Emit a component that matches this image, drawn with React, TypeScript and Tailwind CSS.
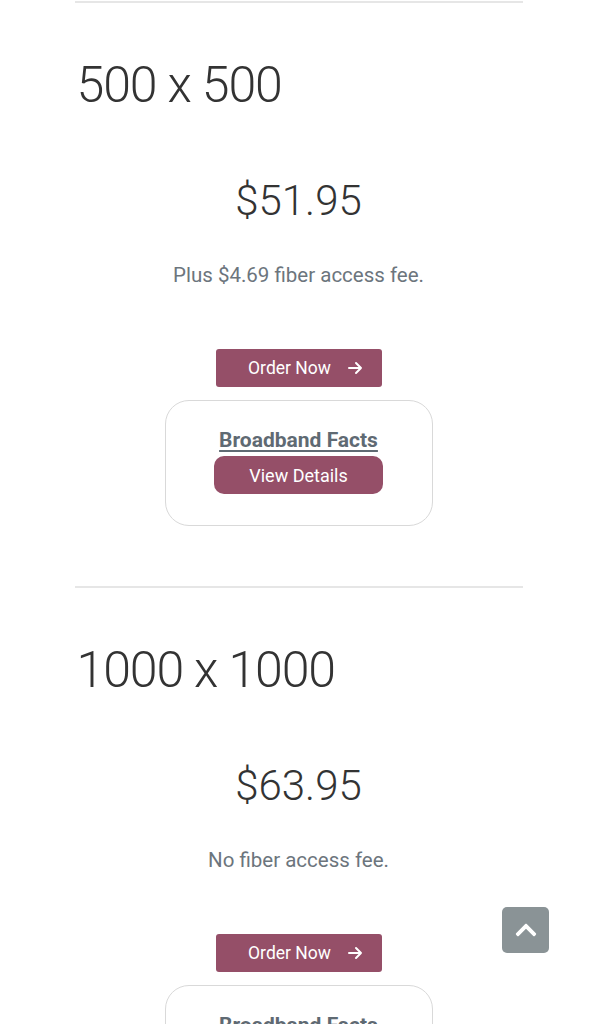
import React from "react";
import { FaChevronUp } from "react-icons/fa";

const Arrow = () => (
  <svg width="16" height="14" viewBox="0 0 16 14" fill="none" stroke="white" strokeWidth="2" strokeLinecap="round" strokeLinejoin="round">
    <path d="M2 7h12M9 2l5 5-5 5" />
  </svg>
);

function Plan({ title, price, fee }: { title: string; price: string; fee: string }) {
  return (
    <section>
      <div className="h-[2px] bg-[#e6e6e6]" />
      <h2 className="mt-[49px] pl-[2px] text-[50px] leading-[67px] font-light tracking-[-1.1px] text-[#333333]">{title}</h2>
      <div className="mt-[55px] text-center text-[42px] leading-[53px] font-light text-[#333333]">{price}</div>
      <p className="mt-[35px] text-center text-[20.5px] leading-[27px] text-[#6c757d]">{fee}</p>
      <div className="mt-[60px] flex justify-center">
        <button className="flex h-[38px] w-[166px] items-center justify-center gap-[16px] rounded-[3px] bg-[#954f68] pl-[14px] text-[17.5px] text-white">
          <span>Order Now</span>
          <Arrow />
        </button>
      </div>
      <div className="mt-[13px] flex justify-center">
        <div className="flex h-[126px] w-[268px] flex-col items-center rounded-[24px] border border-[#d9d9d9] pt-[26px]">
          <a className="text-[21px] leading-[26px] font-bold text-[#5f6a73] underline decoration-[2px] underline-offset-[3px]">Broadband Facts</a>
          <button className="mt-[3px] h-[38px] w-[169px] rounded-[10px] bg-[#954f68] text-[18px] text-white">View Details</button>
        </div>
      </div>
      <div className="h-[60px]" />
    </section>
  );
}

export default function App() {
  return (
    <div className="min-h-[1024px] bg-white" style={{ fontFamily: "Roboto, 'Noto Sans', sans-serif" }}>
      <div className="mx-auto w-[448px] pt-[1px]">
        <Plan title="500 x 500" price="$51.95" fee="Plus $4.69 fiber access fee." />
        <Plan title="1000 x 1000" price="$63.95" fee="No fiber access fee." />
      </div>
      <button className="fixed right-[48px] bottom-[71px] flex h-[46px] w-[47px] items-center justify-center rounded-[5px] bg-[#8a9396]">
        <FaChevronUp className="text-white" size={24} />
      </button>
    </div>
  );
}
